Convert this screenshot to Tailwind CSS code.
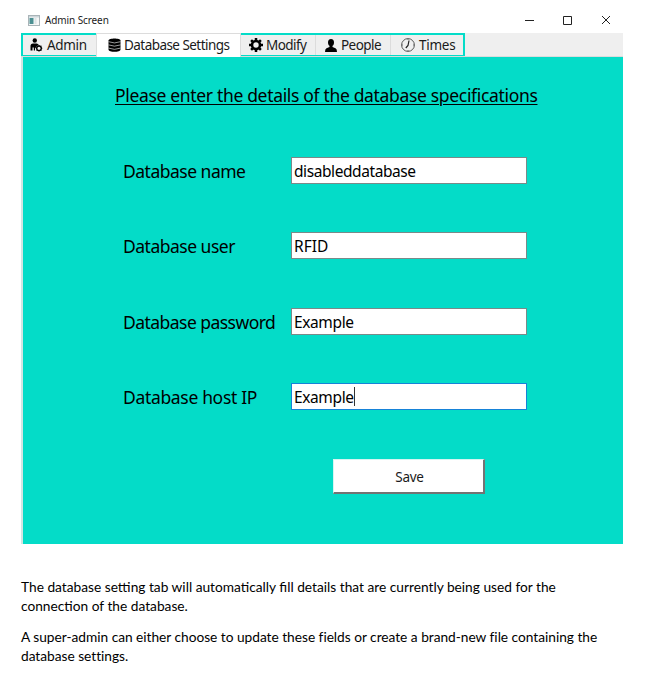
<!DOCTYPE html>
<html lang="en">
<head>
<meta charset="utf-8">
<title>Admin Screen</title>
<script src="https://cdn.jsdelivr.net/npm/@tailwindcss/browser@4"></script>
</head>
<body class="bg-white w-[647px] h-[693px] overflow-hidden text-black font-['Noto_Sans',sans-serif]">
<main class="ml-[21px] w-[602px]">
  <header class="h-[33px] flex items-center pt-[7px] pl-[7px]">
    <svg class="w-3 h-[11px]" viewBox="0 0 12 11"><rect x=".5" y=".5" width="11" height="10" fill="#f5f6f6" stroke="#a9b4b8"/><rect x="1" y="1" width="10" height="1.5" fill="#cdd6da"/><rect x="1.5" y="3" width="4" height="6" fill="#4b8f92"/><rect x="6.5" y="3" width="2" height="6" fill="#dce3e5"/></svg>
    <span class="ml-[5px] text-[10px] leading-[14px] tracking-[-0.1px] whitespace-nowrap text-[#222]">Admin Screen</span>
    <svg class="ml-auto mr-[12px] w-[86px] h-[10px]" viewBox="0 0 86 10" fill="none" stroke="#222"><path d="M0 5.5h9M38.500 1.500h8v8h-8z"/><path d="M77 1l8 8M85 1l-8 8"/></svg>
  </header>
  <nav class="h-6 bg-[#efefef] flex text-[13.5px] leading-[18px] tracking-[-0.55px] whitespace-nowrap border-b border-[#dcdcdc] text-[#1a1a1a]">
    <div class="w-[75px] border-t-2 border-l-2 border-b border-[#04dcc8] flex items-center pl-[7px]">
      <svg class="w-[13px] h-[14px]" viewBox="0 0 13 14"><circle cx="4.800" cy="2.500" r="2.200"/><path d="M.5 12.500V8Q.5 5.500 3 5.500H6.500Q8.300 5.500 8.800 7Q6.300 7.500 5.800 9.700L5 10V12.500H3.800V9.500H2.500V12.500z"/><circle cx="9" cy="10.300" r="2.300" fill="none" stroke="#000" stroke-width="1.400"/><path d="M9 7v1M9 12.500v1M5.800 10.300h1M11.300 10.300h1M6.700 8l.7.700M11.300 8l-.7.700M6.700 12.600l.7-.7M11.300 12.600l-.7-.7" stroke="#000" stroke-width=".9"/></svg>
      <span class="ml-[4px] tracking-[-0.35px]">Admin</span>
    </div>
    <div class="w-[145px] bg-white border-t border-x border-[#dcdcdc] flex items-center pl-[11px] -mb-px pb-px">
      <svg class="w-[13px] h-[14px]" viewBox="0 0 13 14"><path d="M.5 2.500C.5-.3 12.500-.3 12.500 2.500v9C12.500 14.600.5 14.600.5 11.500z"/><path d="M.5 3.700q6 2.500 12 0M.5 6.900q6 2.500 12 0M.5 10.100q6 2.500 12 0" fill="none" stroke="#fff" stroke-width=".6"/></svg>
      <span class="ml-[3px]">Database Settings</span>
    </div>
    <div class="w-[74px] border-t-2 border-b border-[#04dcc8] flex items-center pl-[8px]">
      <svg class="w-[14px] h-[14px]" viewBox="0 0 14 14" fill="none" stroke="#000"><circle cx="7" cy="7" r="4" stroke-width="2.600"/><path d="M7 0v2.500M7 11.500V14M0 7h2.500M11.500 7H14M2.100 2.100l1.600 1.600M10.300 10.300l1.600 1.600M2.100 11.900l1.600-1.600M10.300 3.700l1.600-1.600" stroke-width="2.500"/></svg>
      <span class="ml-[3px]">Modify</span>
    </div>
    <div class="w-[76px] border-t-2 border-b border-[#04dcc8] flex">
      <div class="flex items-center pl-[9px] w-full border-x border-[#dcdcdc]">
      <svg class="w-[12px] h-[13px]" viewBox="0 0 12 13"><ellipse cx="6" cy="3.500" rx="3" ry="3.500"/><path d="M4.500 6h3v2l3 1.200Q12 10 12 13H0q0-3 1.500-3.800l3-1.200z"/></svg>
      <span class="ml-[4px]">People</span></div>
    </div>
    <div class="w-[74px] border-t-2 border-b border-r-2 border-[#04dcc8] flex items-center pl-[10px]">
      <svg class="w-[14px] h-[14px]" viewBox="0 0 14 14" fill="none" stroke="#444"><circle cx="7" cy="7" r="6.400" stroke-width=".9"/><path d="M8 2.500L7 7.500 4.800 10" stroke="#222" stroke-width="1.200"/><path d="M7 1v1M7 12v1M1 7h1M12 7h1" stroke-width=".7"/></svg>
      <span class="ml-[4px] tracking-[-0.25px]">Times</span>
    </div>
  </nav>
  <section class="h-[487px] bg-[#04dcc8] border-l-2 border-[#d3e5e3] flex flex-col">
    <h1 class="mt-[26px] ml-[92px] text-[17.5px] leading-6 tracking-[-0.33px] whitespace-nowrap underline decoration-1 underline-offset-2">Please enter the details of the database specifications</h1>
    <form class="mt-[50px] ml-[100px] flex flex-col gap-[49px] text-[17.5px] tracking-[-0.5px] whitespace-nowrap">
      <div class="flex items-center h-[26.500px]"><label class="w-[168px] pt-px">Database name</label><div class="w-[236px] h-[27px] bg-white border border-[#7a8a89] pl-[2px] text-[15.5px] leading-[26px] tracking-[-0.42px]">disableddatabase</div></div>
      <div class="flex items-center h-[26.500px]"><label class="w-[168px] pt-px">Database user</label><div class="w-[236px] h-[27px] bg-white border border-[#7a8a89] pl-[2px] text-[15.5px] leading-[26px] tracking-normal">RFID</div></div>
      <div class="flex items-center h-[26.500px]"><label class="w-[168px] pt-px tracking-[-0.54px]">Database password</label><div class="w-[236px] h-[27px] bg-white border border-[#7a8a89] pl-[2px] text-[15.5px] leading-[26px] tracking-[-0.38px]">Example</div></div>
      <div class="flex items-center h-[26.500px]"><label class="w-[168px] pt-px tracking-[-0.33px]">Database host IP</label><div class="w-[236px] h-[27px] bg-white border border-[#1683d8] pl-[2px] text-[15.5px] leading-[26px] tracking-[-0.38px] flex items-center"><span class="pt-px">Example</span><i class="w-px h-[19px] bg-[#333]"></i></div></div>
    </form>
    <div class="mt-[49px] ml-[310px] w-[152px] h-[35px] bg-white border-r-2 border-b-2 border-t border-l border-t-[#d5f5f2] border-l-[#d5f5f2] border-r-[#737373] border-b-[#737373] flex items-center justify-center pt-[2px] pl-[2px] text-[13.5px] tracking-[-0.3px] text-[#1a1a1a]">Save</div>
  </section>
  <article class="mt-[33px] font-[Lato,sans-serif] text-[13.73px] leading-[19px] whitespace-nowrap">
    <p>The database setting tab will automatically fill details that are currently being used for the<br>connection of the database.</p>
    <p class="mt-3 tracking-[-0.02px]">A super-admin can either choose to update these fields or create a brand-new file containing the<br>database settings.</p>
  </article>
</main>
</body>
</html>
